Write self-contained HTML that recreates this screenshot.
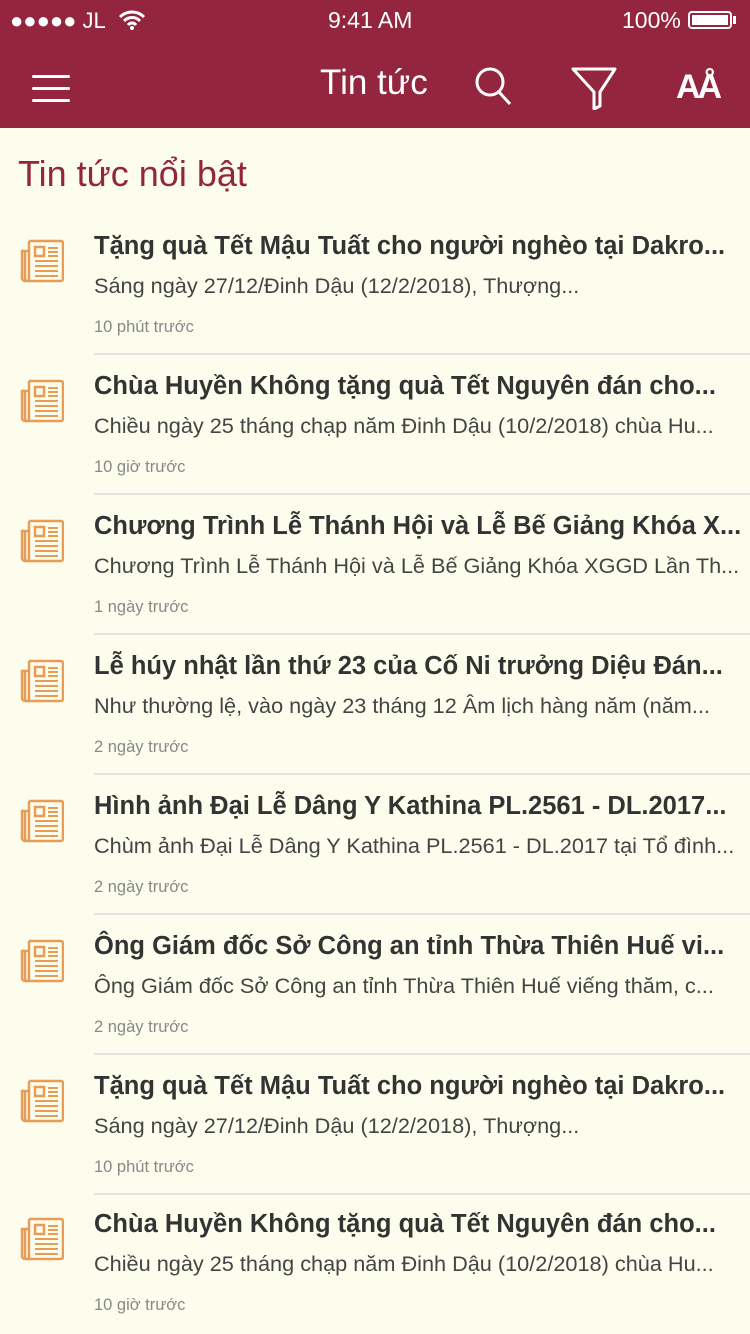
<html><head><style>
body{margin:0;width:750px;height:1334px;background:#fdfdee;font-family:"Liberation Sans",sans-serif;position:relative;overflow:hidden}
.hd{position:absolute;left:0;top:0;width:750px;height:128px;background:#93253e;color:#fff}
.a{position:absolute;white-space:nowrap}
.sec{position:absolute;left:18px;top:153px;font-size:36px;color:#93253e}
.row{position:absolute;left:0;width:750px;height:140px}
.ic{position:absolute;left:20px;top:25px}
.t{position:absolute;left:94px;top:18px;font-size:25.5px;font-weight:bold;color:#333;white-space:nowrap}
.s{position:absolute;left:94px;top:59px;font-size:21.7px;color:#444;white-space:nowrap}
.m{position:absolute;left:94px;top:104px;font-size:16.5px;color:#888}
.d{position:absolute;left:94px;right:0;top:139px;height:2px;background:#e3e3e0}
</style></head><body>
<div class="hd">
<div class="a" style="left:10px;top:8px;font-size:22px">●●●●● JL</div>
<svg class="a" style="left:118px;top:10px" width="28" height="20" viewBox="0 0 28 20"><path d="M2 7a17 17 0 0 1 24 0M6 11a11 11 0 0 1 16 0M10 15a5 5 0 0 1 8 0" stroke="#fff" stroke-width="3" fill="none"/><circle cx="14" cy="18" r="2" fill="#fff"/></svg>
<div class="a" style="left:328px;top:7px;font-size:23px">9:41 AM</div>
<div class="a" style="left:622px;top:7px;font-size:23px">100%</div>
<div class="a" style="left:688px;top:11px;width:44px;height:18px;border:2px solid #fff;border-radius:4px;box-sizing:border-box;padding:2px"><div style="background:#fff;width:100%;height:100%"></div></div>
<div class="a" style="left:733px;top:16px;width:3px;height:8px;background:#fff"></div>
<div class="a" style="left:32px;top:75px;width:38px;height:3px;background:#fff;border-radius:2px"></div>
<div class="a" style="left:32px;top:87px;width:38px;height:3px;background:#fff;border-radius:2px"></div>
<div class="a" style="left:32px;top:99px;width:38px;height:3px;background:#fff;border-radius:2px"></div>
<div class="a" style="left:320px;top:63px;font-size:35px">Tin tức</div>
<svg class="a" style="left:474px;top:66px" width="40" height="40"><circle cx="16" cy="16" r="13" stroke="#fff" stroke-width="3" fill="none"/><path d="M25 26l11 12" stroke="#fff" stroke-width="3"/></svg>
<svg class="a" style="left:570px;top:66px" width="48" height="44"><path d="M3 3h42L30 26v14l-6 3V26z" stroke="#fff" stroke-width="3" fill="none" stroke-linejoin="round"/></svg>
<div class="a" style="left:676px;top:68px;font-size:34px;font-weight:bold;letter-spacing:-3px">AÅ</div>
</div>
<div class="sec">Tin tức nổi bật</div>
<div id="l"></div>
<script>
var d=[["Tặng quà Tết Mậu Tuất cho người nghèo tại Dakro...","Sáng ngày 27/12/Đinh Dậu (12/2/2018), Thượng...","10 phút trước"],
["Chùa Huyền Không tặng quà Tết Nguyên đán cho...","Chiều ngày 25 tháng chạp năm Đinh Dậu (10/2/2018) chùa Hu...","10 giờ trước"],
["Chương Trình Lễ Thánh Hội và Lễ Bế Giảng Khóa X...","Chương Trình Lễ Thánh Hội và Lễ Bế Giảng Khóa XGGD Lần Th...","1 ngày trước"],
["Lễ húy nhật lần thứ 23 của Cố Ni trưởng Diệu Đán...","Như thường lệ, vào ngày 23 tháng 12 Âm lịch hàng năm (năm...","2 ngày trước"],
["Hình ảnh Đại Lễ Dâng Y Kathina PL.2561 - DL.2017...","Chùm ảnh Đại Lễ Dâng Y Kathina PL.2561 - DL.2017 tại Tổ đình...","2 ngày trước"],
["Ông Giám đốc Sở Công an tỉnh Thừa Thiên Huế vi...","Ông Giám đốc Sở Công an tỉnh Thừa Thiên Huế viếng thăm, c...","2 ngày trước"],
["Tặng quà Tết Mậu Tuất cho người nghèo tại Dakro...","Sáng ngày 27/12/Đinh Dậu (12/2/2018), Thượng...","10 phút trước"],
["Chùa Huyền Không tặng quà Tết Nguyên đán cho...","Chiều ngày 25 tháng chạp năm Đinh Dậu (10/2/2018) chùa Hu...","10 giờ trước"]];
var ic='<svg class="ic" width="44" height="44" viewBox="0 0 44 44"><g stroke="#e89c55" stroke-width="2.5" fill="none"><path d="M9 2h32a2 2 0 0 1 2 2v36a2 2 0 0 1-2 2H5a3 3 0 0 1-3-3V12h7"/><path d="M9 2v38a2 2 0 0 1-4 0V12"/><rect x="15" y="8" width="9" height="9"/></g><g stroke="#e89c55" stroke-width="2"><path d="M28 9h10M28 13h10M28 17h10M15 22h23M15 27h23M15 32h23M15 37h23"/></g></svg>';
var h='';d.forEach(function(r,i){var y=214+i*140-(i==7?2:0);h+='<div class="row" style="top:'+y+'px">'+ic+'<div class="t">'+r[0]+'</div><div class="s">'+r[1]+'</div><div class="m">'+r[2]+'</div>'+(i<7?'<div class="d"></div>':'')+'</div>';});
document.getElementById('l').innerHTML=h;
</script>
</body></html>
